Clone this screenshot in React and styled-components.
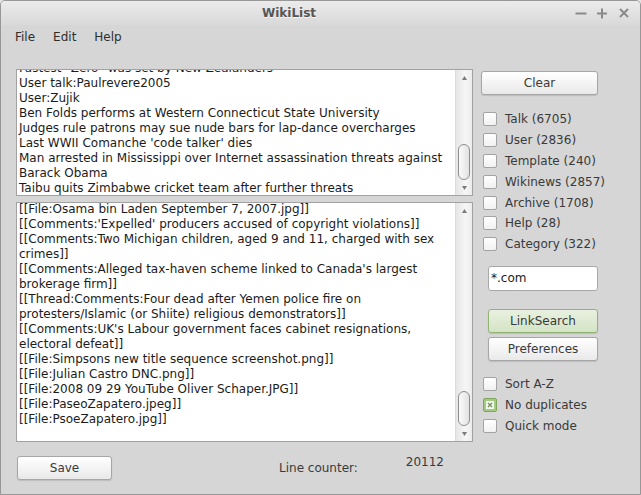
import styled, { createGlobalStyle } from "styled-components";

const GlobalStyle = createGlobalStyle`
  html, body {
    margin: 0;
    padding: 0;
    background: #e4e4e4;
  }
  body {
    font-family: "DejaVu Sans", "Liberation Sans", sans-serif;
    font-size: 12px;
  }
`;

const Window = styled.div`
  width: 641px;
  height: 495px;
  box-sizing: border-box;
  border: 1px solid #979797;
  border-radius: 5px 5px 0 0;
  background: #d6d6d6;
  display: flex;
  flex-direction: column;
  overflow: hidden;
`;

const TitleBar = styled.div`
  height: 24px;
  flex-shrink: 0;
  display: flex;
  align-items: center;
  background: linear-gradient(#ebebeb, #d9d9d9);
`;

const Title = styled.div`
  flex: 1;
  padding-left: 7px;
  text-align: center;
  font-weight: bold;
  font-size: 12px;
  color: #555;
  text-shadow: 0 1px 0 rgba(255, 255, 255, 0.7);
`;

const Controls = styled.div`
  width: 70px;
  box-sizing: border-box;
  padding-left: 5px;
  display: flex;
  gap: 10px;
  align-items: center;
`;

const MenuBar = styled.div`
  height: 23px;
  flex-shrink: 0;
  display: flex;
  align-items: center;
  gap: 18px;
  padding-left: 14px;
  color: #2e2e2e;
`;

const Main = styled.div`
  display: flex;
  gap: 8px;
  padding: 21px 0 0 15px;
`;

const LeftCol = styled.div`
  width: 457px;
  display: flex;
  flex-direction: column;
  gap: 6px;
`;

const TextArea = styled.div`
  height: ${(p) => p.$height}px;
  box-sizing: border-box;
  border: 1px solid #a2a2a2;
  display: flex;
  background: #fff;
  overflow: hidden;
`;

const TextContent = styled.div`
  flex: 1;
  overflow: hidden;
  padding-left: 2px;
`;

const Lines = styled.div`
  margin-top: ${(p) => p.$offset}px;
  line-height: 15px;
  color: #1b1b1b;
  white-space: pre;
`;

const ScrollBar = styled.div`
  width: 16px;
  display: flex;
  flex-direction: column;
  background: linear-gradient(to right, #e6e6e6, #f6f6f6 60%, #ececec);
  border-left: 1px solid #dcdcdc;
`;

const Arrow = styled.div`
  height: 15px;
  flex-shrink: 0;
  display: flex;
  align-items: center;
  justify-content: center;
`;

const Track = styled.div`
  flex: 1;
  display: flex;
  flex-direction: column;
  justify-content: flex-end;
  align-items: center;
`;

const Thumb = styled.div`
  width: 12px;
  height: ${(p) => p.$size}px;
  box-sizing: border-box;
  border: 1px solid #8e8e8e;
  border-radius: 6px;
  background: linear-gradient(to right, #fafafa, #e2e2e2);
`;

const RightCol = styled.div`
  width: 117px;
  display: flex;
  flex-direction: column;
  padding-top: 2px;
  color: #3a3a3a;
`;

const Button = styled.button`
  width: ${(p) => (p.$width ? `${p.$width}px` : "100%")};
  height: 24px;
  margin: 0;
  padding: 0;
  box-sizing: border-box;
  border: 1px solid ${(p) => (p.$green ? "#93b276" : "#a6a6a6")};
  border-radius: 3px;
  background: ${(p) =>
    p.$green
      ? "linear-gradient(#e9f1e1, #d3e4c4)"
      : "linear-gradient(#ffffff, #e9e9e9)"};
  box-shadow: 0 1px 1px rgba(0, 0, 0, 0.12);
  font-family: "DejaVu Sans", "Liberation Sans", sans-serif;
  font-size: 12px;
  color: #3a3a3a;
`;

const CheckList = styled.div`
  margin-top: ${(p) => p.$top}px;
  display: flex;
  flex-direction: column;
`;

const CheckRow = styled.label`
  height: 20.8px;
  display: flex;
  align-items: center;
  gap: 8px;
  padding-left: 2px;
  white-space: nowrap;
`;

const Box = styled.span`
  width: 14px;
  height: 14px;
  box-sizing: border-box;
  border: 1px solid ${(p) => (p.$checked ? "#7fa65c" : "#a3a3a3")};
  border-radius: 2px;
  background: ${(p) =>
    p.$checked ? "#a3c983" : "linear-gradient(#ffffff, #f1f1f1)"};
  display: flex;
  align-items: center;
  justify-content: center;
  flex-shrink: 0;
`;

const RightInset = styled.div`
  padding-left: 7px;
  margin-top: ${(p) => p.$top || 0}px;
  display: flex;
  flex-direction: column;
  gap: 4px;
`;

const Input = styled.div`
  height: 25px;
  box-sizing: border-box;
  border: 1px solid #a8a8a8;
  border-radius: 3px;
  background: #fff;
  display: flex;
  align-items: center;
  padding-left: 2px;
  color: #222;
`;

const Footer = styled.div`
  display: flex;
  height: 24px;
  margin-top: 14px;
  padding-left: 16px;
  color: #3a3a3a;
`;

const CounterLabel = styled.span`
  align-self: center;
  margin-left: 167px;
`;

const CounterValue = styled.span`
  align-self: flex-start;
  margin-left: 48px;
  line-height: 12px;
`;

const topLines = [
  "Fastest \"Zero\" was set by New Zealanders",
  "User talk:Paulrevere2005",
  "User:Zujik",
  "Ben Folds performs at Western Connecticut State University",
  "Judges rule patrons may sue nude bars for lap-dance overcharges",
  "Last WWII Comanche 'code talker' dies",
  "Man arrested in Mississippi over Internet assassination threats against\nBarack Obama",
  "Taibu quits Zimbabwe cricket team after further threats",
];

const bottomLines = [
  "[[File:Osama bin Laden September 7, 2007.jpg]]",
  "[[Comments:'Expelled' producers accused of copyright violations]]",
  "[[Comments:Two Michigan children, aged 9 and 11, charged with sex\ncrimes]]",
  "[[Comments:Alleged tax-haven scheme linked to Canada's largest\nbrokerage firm]]",
  "[[Thread:Comments:Four dead after Yemen police fire on\nprotesters/Islamic (or Shiite) religious demonstrators]]",
  "[[Comments:UK's Labour government faces cabinet resignations,\nelectoral defeat]]",
  "[[File:Simpsons new title sequence screenshot.png]]",
  "[[File:Julian Castro DNC.png]]",
  "[[File:2008 09 29 YouTube Oliver Schaper.JPG]]",
  "[[File:PaseoZapatero.jpeg]]",
  "[[File:PsoeZapatero.jpg]]",
];

const namespaces = [
  ["Talk", 6705],
  ["User", 2836],
  ["Template", 240],
  ["Wikinews", 2857],
  ["Archive", 1708],
  ["Help", 28],
  ["Category", 322],
];

const options = [
  ["Sort A-Z", false],
  ["No duplicates", true],
  ["Quick mode", false],
];

const Tri = ({ up }) => (
  <svg width="5" height="4" viewBox="0 0 5 4">
    <path d={up ? "M0 4 L2.5 0 L5 4 Z" : "M0 0 L5 0 L2.5 4 Z"} fill="#7a7a7a" />
  </svg>
);

const Scroller = ({ thumb }) => (
  <ScrollBar>
    <Arrow>
      <Tri up />
    </Arrow>
    <Track>
      <Thumb $size={thumb} />
    </Track>
    <Arrow>
      <Tri />
    </Arrow>
  </ScrollBar>
);

const Check = ({ label, checked }) => (
  <CheckRow>
    <Box $checked={checked}>
      {checked && (
        <svg width="8" height="8" viewBox="0 0 8 8">
          <rect x="0" y="0" width="8" height="8" fill="#f4f8f0" />
          <path d="M2 2 L6 6 M6 2 L2 6" stroke="#7d9a66" strokeWidth="1.6" />
        </svg>
      )}
    </Box>
    {label}
  </CheckRow>
);

const WinIcon = ({ d }) => (
  <svg width="12" height="12" viewBox="0 0 12 12">
    <path d={d} stroke="#8a8a8a" strokeWidth="2" fill="none" />
  </svg>
);

export default function App() {
  return (
    <>
      <GlobalStyle />
      <Window>
        <TitleBar>
          <Title>WikiList</Title>
          <Controls>
            <WinIcon d="M0.5 6.5 H11.5" />
            <WinIcon d="M0 6.5 H10 M5 1.5 V11.5" />
            <WinIcon d="M1 2 L9 10 M9 2 L1 10" />
          </Controls>
        </TitleBar>
        <MenuBar>
          <span>File</span>
          <span>Edit</span>
          <span>Help</span>
        </MenuBar>
        <Main>
          <LeftCol>
            <TextArea $height={127}>
              <TextContent>
                <Lines $offset={-9}>
                  {topLines.map((l, i) => (
                    <div key={i}>{l}</div>
                  ))}
                </Lines>
              </TextContent>
              <Scroller thumb={36} />
            </TextArea>
            <TextArea $height={240}>
              <TextContent>
                <Lines $offset={-1}>
                  {bottomLines.map((l, i) => (
                    <div key={i}>{l}</div>
                  ))}
                </Lines>
              </TextContent>
              <Scroller thumb={35} />
            </TextArea>
          </LeftCol>
          <RightCol>
            <Button>Clear</Button>
            <CheckList $top={14}>
              {namespaces.map(([name, n]) => (
                <Check key={name} label={`${name} (${n})`} />
              ))}
            </CheckList>
            <RightInset $top={11}>
              <Input>*.com</Input>
            </RightInset>
            <RightInset $top={18}>
              <Button $green>LinkSearch</Button>
              <Button>Preferences</Button>
            </RightInset>
            <CheckList $top={13}>
              {options.map(([name, on]) => (
                <Check key={name} label={name} checked={on} />
              ))}
            </CheckList>
          </RightCol>
        </Main>
        <Footer>
          <Button $width={95}>Save</Button>
          <CounterLabel>Line counter:</CounterLabel>
          <CounterValue>20112</CounterValue>
        </Footer>
      </Window>
    </>
  );
}
